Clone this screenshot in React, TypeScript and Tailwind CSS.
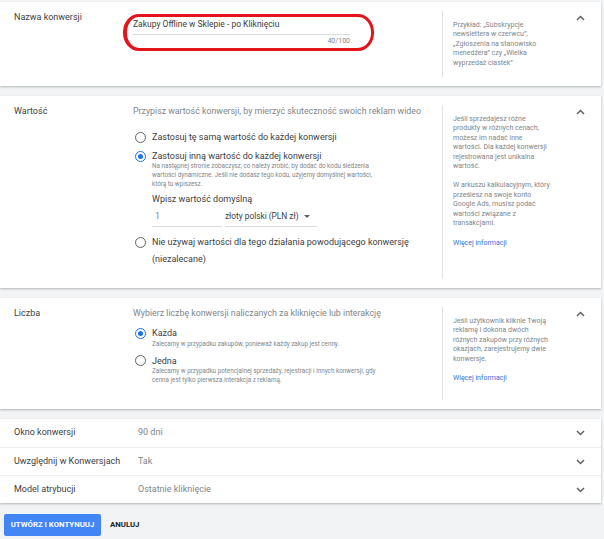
import React from 'react';

const ChevronUp = () => (
  <svg width="9" height="6" viewBox="0 0 9 6" className="text-[#5f6368]">
    <polyline points="1,5 4.5,1.5 8,5" fill="none" stroke="currentColor" strokeWidth="1.5" />
  </svg>
);

const ChevronDown = () => (
  <svg width="9" height="6" viewBox="0 0 9 6" className="text-[#5f6368]">
    <polyline points="1,1 4.5,4.5 8,1" fill="none" stroke="currentColor" strokeWidth="1.5" />
  </svg>
);

const Radio = ({ checked, className }: { checked?: boolean; className?: string }) => (
  <span
    className={`flex h-[11px] w-[11px] shrink-0 items-center justify-center rounded-full border-[1.5px] ${
      checked ? 'border-[#1a73e8]' : 'border-[#5f6368]'
    } ${className ?? ''}`}
  >
    {checked && <span className="h-[5px] w-[5px] rounded-full bg-[#1a73e8]" />}
  </span>
);

const Help = ({ children }: { children: React.ReactNode }) => (
  <div className="my-[9px] w-[118px] shrink-0 border-l border-[#e3e3e3] pl-[10px] pt-[10px] text-[7px] leading-[9.4px] text-[#80868b] whitespace-nowrap">
    {children}
  </div>
);

const Label = ({ children }: { children: React.ReactNode }) => (
  <div className="w-[133px] shrink-0 pl-[14px] pt-[9px] text-[9px] leading-[12px] text-[#3c4043]">{children}</div>
);

const Toggle = () => (
  <div className="flex flex-1 justify-center pt-[13px]">
    <ChevronUp />
  </div>
);

const Row = ({ label, value }: { label: string; value: string }) => (
  <div className="flex h-[28px] items-center border-t border-[#eeeeee] first:border-t-0">
    <div className="w-[138px] shrink-0 pl-[14px] text-[9px] text-[#3c4043]">{label}</div>
    <div className="w-[422px] text-[9px] text-[#80868b]">{value}</div>
    <div className="flex flex-1 justify-center">
      <ChevronDown />
    </div>
  </div>
);

const App: React.FC = () => {
  return (
    <div className="min-h-[539px] w-[604px] bg-[#f1f3f4] pt-[2px] font-['Roboto',sans-serif]">
      <div className="flex w-[601px] flex-col gap-[10px]">
        {/* Nazwa konwersji */}
        <div className="relative flex h-[84px] bg-white shadow-[0_1px_2px_rgba(60,64,67,0.35)]">
          <Label>Nazwa konwersji</Label>
          <div className="w-[309px] shrink-0 pt-[16px]">
            <div className="w-[217px] border-b border-[#dadce0] pb-[4px] text-[8.5px] leading-[12px] text-[#3c4043]">
              Zakupy Offline w Sklepie - po Kliknięciu
            </div>
            <div className="w-[217px] pt-[1px] text-right text-[7px] leading-[10px] text-[#80868b]">40/100</div>
          </div>
          <Help>
            Przykład: „Subskrypcje
            <br />
            newslettera w czerwcu”,
            <br />
            „Zgłoszenia na stanowisko
            <br />
            menedżera” czy „Wielka
            <br />
            wyprzedaż ciastek”
          </Help>
          <Toggle />
          <div className="pointer-events-none absolute left-[123px] top-[12px] h-[37px] w-[251px] rounded-[16px/18px] border-[3px] border-l-[4px] border-[#e4141b]" />
        </div>

        {/* Wartość */}
        <div className="flex h-[192px] bg-white shadow-[0_1px_2px_rgba(60,64,67,0.35)]">
          <Label>Wartość</Label>
          <div className="w-[309px] shrink-0 pt-[9px] text-[9px] text-[#3c4043]">
            <p className="text-[8.8px] leading-[12px] text-[#80868b] whitespace-nowrap">
              Przypisz wartość konwersji, by mierzyć skuteczność swoich reklam wideo
            </p>
            <div className="mt-[14px] flex items-start gap-[6px] pl-[2px] leading-[12px]">
              <Radio className="mt-[0.5px]" />
              <span>Zastosuj tę samą wartość do każdej konwersji</span>
            </div>
            <div className="mt-[7px] flex items-start gap-[6px] pl-[2px]">
              <Radio checked className="mt-[0.5px]" />
              <div className="flex flex-col">
                <span className="leading-[12px]">Zastosuj inną wartość do każdej konwersji</span>
                <span className="text-[6.3px] leading-[8.8px] text-[#80868b] whitespace-nowrap">
                  Na następnej stronie zobaczysz, co należy zrobić, by dodać do kodu śledzenia
                  <br />
                  wartości dynamiczne. Jeśli nie dodasz tego kodu, użyjemy domyślnej wartości,
                  <br />
                  którą tu wpiszesz.
                </span>
                <span className="mt-[5px] leading-[12px]">Wpisz wartość domyślną</span>
                <div className="mt-[5px] flex gap-[3px]">
                  <div className="w-[70px] border-b border-[#dadce0] pb-[4px] pl-[3px] leading-[12px] text-[#80868b]">1</div>
                  <div className="flex w-[92px] items-center gap-[5px] border-b border-[#dadce0] pb-[4px] text-[8.3px] leading-[12px] text-[#3c4043] whitespace-nowrap">
                    <span>złoty polski (PLN zł)</span>
                    <svg width="6" height="3" viewBox="0 0 6 3">
                      <polygon points="0,0 6,0 3,3" fill="#5f6368" />
                    </svg>
                  </div>
                </div>
              </div>
            </div>
            <div className="mt-[7px] flex items-start gap-[6px] pl-[2px] leading-[16.6px]">
              <Radio className="mt-[2.8px]" />
              <span>
                Nie używaj wartości dla tego działania powodującego konwersję
                <br />
                (niezalecane)
              </span>
            </div>
          </div>
          <Help>
            Jeśli sprzedajesz różne
            <br />
            produkty w różnych cenach,
            <br />
            możesz im nadać inne
            <br />
            wartości. Dla każdej konwersji
            <br />
            rejestrowana jest unikalna
            <br />
            wartość.
            <div className="mt-[10px]">
              W arkuszu kalkulacyjnym, który
              <br />
              prześlesz na swoje konto
              <br />
              Google Ads, musisz podać
              <br />
              wartości związane z
              <br />
              transakcjami.
            </div>
            <div className="mt-[11px] text-[#3b6fd8]">Więcej informacji</div>
          </Help>
          <Toggle />
        </div>

        {/* Liczba */}
        <div className="flex h-[111px] bg-white shadow-[0_1px_2px_rgba(60,64,67,0.35)]">
          <Label>Liczba</Label>
          <div className="w-[309px] shrink-0 pt-[9px] text-[9px] text-[#3c4043]">
            <p className="text-[8.8px] leading-[12px] text-[#80868b] whitespace-nowrap">
              Wybierz liczbę konwersji naliczanych za kliknięcie lub interakcję
            </p>
            <div className="mt-[8px] flex items-start gap-[6px] pl-[2px]">
              <Radio checked className="mt-[0.5px]" />
              <div className="flex flex-col">
                <span className="leading-[12px]">Każda</span>
                <span className="mt-[1px] text-[6.3px] leading-[8.8px] text-[#80868b] whitespace-nowrap">
                  Zalecamy w przypadku zakupów, ponieważ każdy zakup jest cenny.
                </span>
              </div>
            </div>
            <div className="mt-[6px] flex items-start gap-[6px] pl-[2px]">
              <Radio className="mt-[0.5px]" />
              <div className="flex flex-col">
                <span className="leading-[12px]">Jedna</span>
                <span className="text-[6.3px] leading-[8.8px] text-[#80868b] whitespace-nowrap">
                  Zalecamy w przypadku potencjalnej sprzedaży, rejestracji i innych konwersji, gdy
                  <br />
                  cenna jest tylko pierwsza interakcja z reklamą.
                </span>
              </div>
            </div>
          </div>
          <Help>
            Jeśli użytkownik kliknie Twoją
            <br />
            reklamę i dokona dwóch
            <br />
            różnych zakupów przy różnych
            <br />
            okazjach, zarejestrujemy dwie
            <br />
            konwersje.
            <div className="mt-[10px] text-[#3b6fd8]">Więcej informacji</div>
          </Help>
          <Toggle />
        </div>

        {/* Pozostałe ustawienia */}
        <div className="flex flex-col bg-white shadow-[0_1px_2px_rgba(60,64,67,0.35)]">
          <Row label="Okno konwersji" value="90 dni" />
          <Row label="Uwzględnij w Konwersjach" value="Tak" />
          <Row label="Model atrybucji" value="Ostatnie kliknięcie" />
        </div>
      </div>

      <div className="mt-[11px] flex items-center gap-[9px] pl-[4px]">
        <button className="h-[22px] w-[97px] rounded-[2px] bg-[#4285f4] text-[7.8px] font-bold text-white">
          UTWÓRZ I KONTYNUUJ
        </button>
        <button className="text-[7.8px] font-bold text-[#202124]">ANULUJ</button>
      </div>
    </div>
  );
};

export default App;
